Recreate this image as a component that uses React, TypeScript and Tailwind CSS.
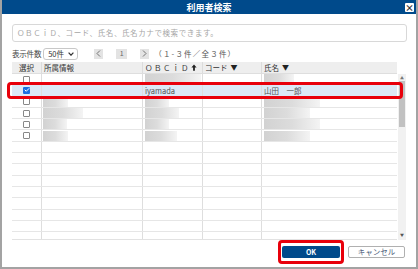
import { Check } from 'lucide-react'

interface Row {
  selected?: boolean;
  obcid?: string;
  name?: string;
  blur?: { org?: number; id?: number; name?: number };
}

const rows: Row[] = [
  { blur: { id: 56, name: 30 } },
  { selected: true, obcid: 'iyamada', name: '山田　一郎' },
  { blur: { org: 25, id: 24, name: 56 } },
  { blur: { org: 40, id: 34, name: 46 } },
  { blur: { org: 24, id: 24, name: 56 } },
  { blur: { org: 25, id: 32, name: 46 } },
  {}, {}, {}, {}, {}, {}, {}, {}, {},
]

function Blur({ w }: { w?: number }) {
  if (!w) return null
  return (
    <div
      className="h-[10px] bg-gradient-to-r from-[#d2d2d2] via-[#dcdcdc] to-[#f4f4f4]"
      style={{ width: w }}
    />
  )
}

function SortDown() {
  return <span className="ml-[3px] text-[7px] text-[#222]">▼</span>
}

function Chevron({ dir }: { dir: 'l' | 'r' }) {
  return (
    <svg className="w-[5px] h-[7px]" viewBox="0 0 5 7">
      <path
        d={dir === 'l' ? 'M4 0.5L1 3.5 4 6.5' : 'M1 0.5L4 3.5 1 6.5'}
        fill="none"
        stroke="#666"
        strokeWidth={0.9}
      />
    </svg>
  )
}

export default function App() {
  return (
    <div className="relative w-[418px] h-[269px] bg-white border-x-2 border-b-2 border-[#a3a3a3] flex flex-col font-['Noto_Sans_CJK_JP',sans-serif] text-[#444] overflow-hidden">
      {/* Title */}
      <div className="relative h-[14px] shrink-0 bg-[#004a8b] flex items-center justify-center">
        <span className="text-[9px] leading-none font-bold text-white">利用者検索</span>
        <div className="absolute right-[2px] top-[3px] w-[9px] h-[9px] bg-white rounded-[1px] flex items-center justify-center">
          <span className="text-[9px] leading-none font-bold text-[#333]">×</span>
        </div>
      </div>

      <div className="flex-1 flex flex-col pl-[10px] pr-[9px]">
        {/* Search */}
        <div className="mt-[10px] h-[18px] rounded-[3px] border border-[#d8d8d8] flex items-center pl-[4px]">
          <span className="text-[7.5px] tracking-[0.6px] text-[#a6a6a6]">
            ＯＢＣｉＤ、コード、氏名、氏名カナで検索できます。
          </span>
        </div>

        {/* Paging */}
        <div className="mt-[5px] h-[13px] flex items-center text-[7.5px] text-[#444]">
          <span className="tracking-[-0.2px]">表示件数</span>
          <div className="ml-[2px] w-[35px] h-[12px] border border-[#c8c8c8] rounded-[3px] flex items-center justify-between pl-[4px] pr-[3px]">
            <span className="text-[7.5px] text-[#333]">50件</span>
            <svg className="w-[6px] h-[4px]" viewBox="0 0 6 4">
              <path d="M0.6 0.6L3 3.2 5.4 0.6" fill="none" stroke="#333" strokeWidth={1.2} />
            </svg>
          </div>
          <div className="ml-[16px] w-[9px] h-[10px] bg-[#e3e3e3] flex items-center justify-center">
            <Chevron dir="l" />
          </div>
          <div className="ml-[13px] w-[11px] h-[10px] bg-[#e3e3e3] flex items-center justify-center text-[7px] text-[#666]">1</div>
          <div className="ml-[13px] w-[9px] h-[10px] bg-[#e3e3e3] flex items-center justify-center">
            <Chevron dir="r" />
          </div>
          <span className="ml-[5px] tracking-[1.2px] text-[#555]">（１-３件／全３件）</span>
        </div>

        {/* Table */}
        <div className="mt-[2px] flex flex-col">
          <div className="flex w-[385px] h-[12px] bg-[#eeeeee] text-[7.5px] text-[#333] border-b border-[#dedede]">
            <div className="w-[30px] flex items-center justify-center border-r border-[#dcdcdc]">選択</div>
            <div className="w-[101px] flex items-center pl-[2px] border-r border-[#dcdcdc]">所属情報</div>
            <div className="w-[60px] flex items-center pl-[2px] tracking-[1.5px] border-r border-[#dcdcdc]">
              ＯＢＣｉＤ
              <svg className="ml-[1px] w-[6px] h-[7px]" viewBox="0 0 6 7">
                <path d="M3 0.5L0.4 3.4H2.1V6.8H3.9V3.4H5.6Z" fill="#222" />
              </svg>
            </div>
            <div className="w-[59px] flex items-center pl-[2px] border-r border-[#dcdcdc]">
              コード<SortDown />
            </div>
            <div className="flex-1 flex items-center pl-[2px]">
              氏名<SortDown />
            </div>
          </div>

          <div className="flex h-[166px]">
            <div className="w-[385px] overflow-hidden border-b border-[#e2e2e2]">
              {rows.map((r, i) => (
                <div
                  key={i}
                  className={`flex h-[11.3px] border-b border-[#e6e6e6] text-[7.5px] ${r.selected ? 'bg-[#dce9f6]' : ''}`}
                >
                  <div className="w-[30px] flex items-center justify-center border-r border-[#dedede]">
                    {r.selected ? (
                      <div className="w-[7px] h-[7px] rounded-[1px] bg-[#1b6fe0] flex items-center justify-center">
                        <Check className="w-[6px] h-[6px] text-white" strokeWidth={4} />
                      </div>
                    ) : i < 6 ? (
                      <div className="w-[7px] h-[7px] rounded-[1px] border border-[#888] bg-white" />
                    ) : null}
                  </div>
                  <div className="w-[101px] flex items-center pl-[1px] border-r border-[#dedede]">
                    <Blur w={r.blur?.org} />
                  </div>
                  <div className="w-[60px] flex items-center pl-[2px] border-r border-[#dedede] text-[#555]">
                    {r.obcid}
                    <Blur w={r.blur?.id} />
                  </div>
                  <div className="w-[59px] border-r border-[#dedede]" />
                  <div className="flex-1 flex items-center pl-[2px] text-[#555]">
                    {r.name}
                    <Blur w={r.blur?.name} />
                  </div>
                </div>
              ))}
            </div>
            {/* Scrollbar */}
            <div className="ml-[1px] w-[8px] bg-[#f1f1f1] flex flex-col items-center">
              <span className="text-[4px] leading-none mt-[2px] text-[#777]">▲</span>
              <div className="mt-[1px] w-[6px] h-[46px] bg-[#c1c1c1]" />
              <div className="flex-1" />
              <span className="text-[4px] leading-none mb-[3px] text-[#555]">▼</span>
            </div>
          </div>
        </div>

        {/* Buttons */}
        <div className="flex justify-end items-start pr-[2px]">
          <div className="border-[3px] border-[#e8000b] rounded-[4px] px-[1px] py-[3px]">
            <div className="w-[58px] h-[12px] bg-[#004a8b] rounded-[2px] flex items-center justify-center text-[7px] font-bold text-white">
              OK
            </div>
          </div>
          <div className="ml-[4px] mt-[6px] w-[57px] h-[12px] border border-[#b0b0b0] rounded-[2px] bg-white flex items-center justify-center text-[7.5px] text-[#4a5a78]">
            キャンセル
          </div>
        </div>
      </div>

      {/* Selected row highlight */}
      <div className="absolute left-[5px] top-[82px] w-[396px] h-[17px] border-[3px] border-[#e8000b] rounded-[4px]" />
    </div>
  )
}
